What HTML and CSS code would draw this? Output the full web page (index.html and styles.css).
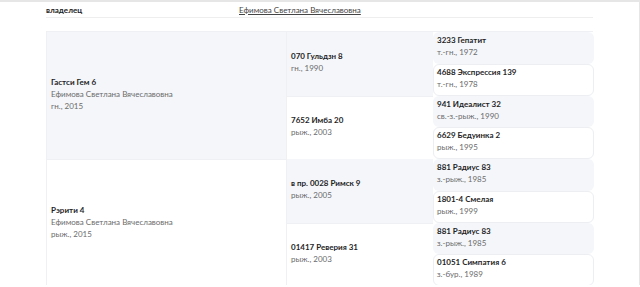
FILE: index.html
```html
<!DOCTYPE html>
<html lang="ru">
<head>
<meta charset="utf-8">
<link rel="stylesheet" href="styles.css">
</head>
<body>
<div class="page">
  <div class="owner-row">
    <div class="owner-label">владелец</div>
    <a class="owner-link" href="#">Ефимова Светлана Вячеславовна</a>
  </div>
  <div class="pedigree">
    <div class="cell c1 shade r1">
      <div class="name">Гастси Гем 6</div>
      <div class="sub">Ефимова Светлана Вячеславовна</div>
      <div class="sub">гн., 2015</div>
    </div>
    <div class="cell c2 shade r1a">
      <div class="name">070 Гульдзн 8</div>
      <div class="sub">гн., 1990</div>
    </div>
    <div class="cell c2 r1b">
      <div class="name">7652 Имба 20</div>
      <div class="sub">рыж., 2003</div>
    </div>
    <div class="cell c1 r2">
      <div class="name">Рэрити 4</div>
      <div class="sub">Ефимова Светлана Вячеславовна</div>
      <div class="sub">рыж., 2015</div>
    </div>
    <div class="cell c2 shade r2a">
      <div class="name">в пр. 0028 Римск 9</div>
      <div class="sub">рыж., 2005</div>
    </div>
    <div class="cell c2 r2b">
      <div class="name">01417 Реверия 31</div>
      <div class="sub">рыж., 2003</div>
    </div>
    <div class="card shade g1"><div class="name">3233 Гепатит</div><div class="sub">т.-гн., 1972</div></div>
    <div class="card white g2"><div class="name">4688 Экспрессия 139</div><div class="sub">т.-гн., 1978</div></div>
    <div class="card shade g3"><div class="name">941 Идеалист 32</div><div class="sub">св.-з.-рыж., 1990</div></div>
    <div class="card white g4"><div class="name">6629 Бедуинка 2</div><div class="sub">рыж., 1995</div></div>
    <div class="card shade g5"><div class="name">881 Радиус 83</div><div class="sub">з.-рыж., 1985</div></div>
    <div class="card white g6"><div class="name">1801-4 Смелая</div><div class="sub">рыж., 1999</div></div>
    <div class="card shade g7"><div class="name">881 Радиус 83</div><div class="sub">з.-рыж., 1985</div></div>
    <div class="card white g8"><div class="name">01051 Симпатия 6</div><div class="sub">з.-бур., 1989</div></div>
  </div>
</div>
</body>
</html>
```
FILE: styles.css
```css
html, body {
  margin: 0;
  padding: 0;
}
body {
  background: #fff;
  font-family: Lato, "Noto Sans", sans-serif;
  font-size: 8px;
  line-height: 12px;
  color: #6b6b6b;
  border-top: 2px solid #e6e6e6;
  border-right: 1px solid #e6e6e6;
  height: 285px;
  box-sizing: border-box;
  overflow: hidden;
}
.page {
  margin-left: 46px;
  width: 547px;
}
.owner-row {
  display: flex;
  height: 15px;
  align-items: center;
  border-bottom: 1px solid #eeeeee;
  margin-bottom: 13px;
}
.owner-label {
  width: 193px;
  font-weight: 700;
  color: #222;
}
.owner-link {
  color: #444;
  text-decoration: underline;
}
.pedigree {
  display: grid;
  grid-template-columns: 239px 147px 161px;
  grid-template-rows: repeat(8, 31.75px);
  border: 1px solid #eef0f4;
  border-right: none;
}
.cell {
  display: flex;
  flex-direction: column;
  justify-content: center;
  background: #fff;
  padding-bottom: 3px;
}
.c1 { grid-column: 1; padding-left: 4px; }
.c2 { grid-column: 2; padding-left: 4px; border-left: 1px solid #eef0f4; }
.r1 { grid-row: 1 / 5; }
.r2 { grid-row: 5 / 9; border-top: 1px solid #eef0f4; }
.r1a { grid-row: 1 / 3; }
.r1b { grid-row: 3 / 5; border-top: 1px solid #eef0f4; }
.r2a { grid-row: 5 / 7; }
.r2b { grid-row: 7 / 9; border-top: 1px solid #eef0f4; }
.shade { background: #f4f6fa; }
.card {
  grid-column: 3;
  padding: 2px 4px 0;
  border-radius: 6px;
  box-sizing: border-box;
}
.card.white {
  background: #fff;
  border: 1px solid #eceef2;
  padding: 1px 3px 0;
}
.g1 { grid-row: 1; }
.g2 { grid-row: 2; }
.g3 { grid-row: 3; }
.g4 { grid-row: 4; }
.g5 { grid-row: 5; }
.g6 { grid-row: 6; }
.g7 { grid-row: 7; }
.g8 { grid-row: 8; }
.name {
  font-weight: 700;
  color: #1f1f1f;
}
.sub {
  color: #6b6b6b;
}
```
